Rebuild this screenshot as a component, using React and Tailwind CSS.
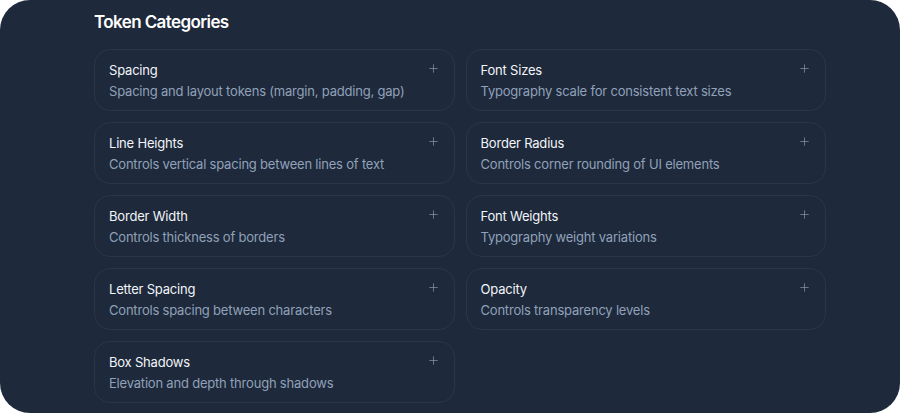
import { Plus } from "lucide-react";

const categories = [
  ["Spacing", "Spacing and layout tokens (margin, padding, gap)"],
  ["Font Sizes", "Typography scale for consistent text sizes"],
  ["Line Heights", "Controls vertical spacing between lines of text"],
  ["Border Radius", "Controls corner rounding of UI elements"],
  ["Border Width", "Controls thickness of borders"],
  ["Font Weights", "Typography weight variations"],
  ["Letter Spacing", "Controls spacing between characters"],
  ["Opacity", "Controls transparency levels"],
  ["Box Shadows", "Elevation and depth through shadows"]
];

export default function App() {
  return (
    <div className="h-[413px] w-[900px] bg-white font-['Inter',sans-serif]">
      <div className="h-full w-full overflow-hidden rounded-[30px] bg-[#1e293b] pl-[94px] pt-[10px]">
        <h2 className="text-[17px] font-semibold leading-6 tracking-[-0.6px] text-white">Token Categories</h2>
        <div className="mt-[15px] grid w-[732px] grid-cols-2 gap-[11px]">
          {categories.map(([title, copy]) => (
            <div key={title} className="flex items-start justify-between rounded-2xl border border-white/[0.06] px-[14px] pb-[10px] pt-[11px]">
              <div className="tracking-[-0.2px]">
                <p className="text-[13px] leading-[18px] text-slate-100">{title}</p>
                <p className="mt-[3px] text-[13px] leading-[18px] text-slate-400">{copy}</p>
              </div>
              <Plus size={13} strokeWidth={1.5} className="mt-[1px] text-slate-400/80" />
            </div>
          ))}
        </div>
      </div>
    </div>
  );
}
